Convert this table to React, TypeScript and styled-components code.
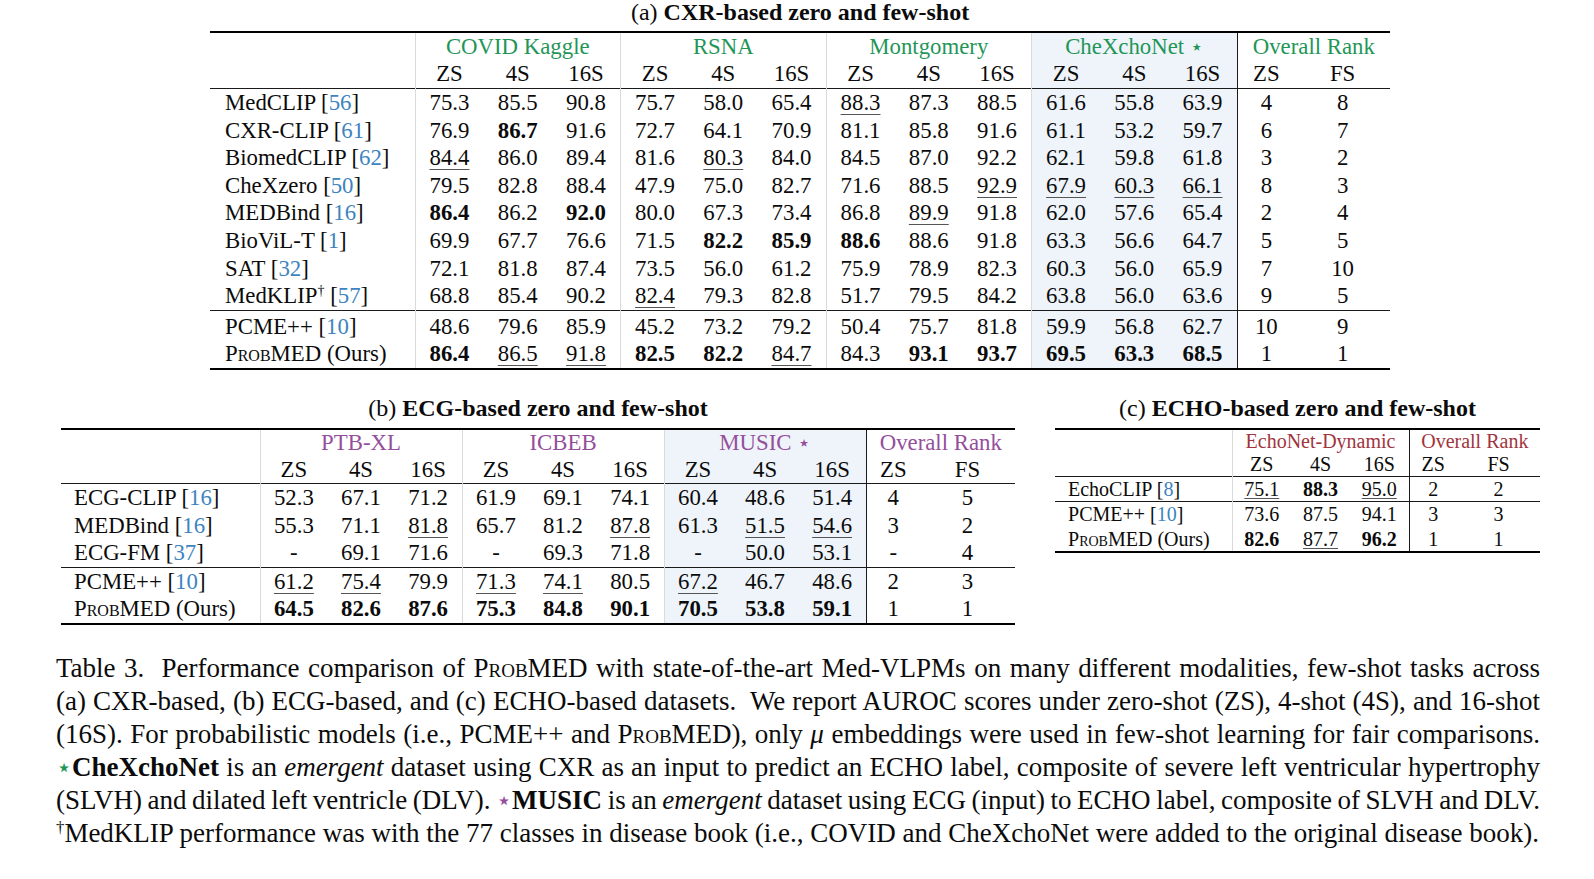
import React from "react";
import styled, { createGlobalStyle, css } from "styled-components";

const GREEN = "#1f9658";
const PURPLE = "#944f9c";
const RED = "#a1343d";
const BLUE = "#3d84c0";
const SHADE = "#eef4fa";

const GlobalStyle = createGlobalStyle`
  html, body { margin: 0; padding: 0; background: #fff; }
  body {
    font-family: "Liberation Serif", "Times New Roman", "DejaVu Serif", serif;
    color: #0b0b0b;
    overflow: hidden;
  }
`;

const Page = styled.main`
  width: 1594px;
  height: 879px;
  display: flex;
  flex-direction: column;
  align-items: flex-start;
`;

const Block = styled.section<{ $ml?: number }>`
  display: flex;
  flex-direction: column;
  align-items: stretch;
  margin-left: ${(p) => p.$ml ?? 0}px;
`;

const Pair = styled.div`
  display: flex;
  align-items: flex-start;
  gap: 40px;
  margin-left: 61px;
  margin-top: 26px;
`;

const Title = styled.div<{ $gap: number }>`
  font-size: 24px;
  line-height: 26px;
  text-align: center;
  white-space: nowrap;
  margin-top: -1px;
  margin-bottom: ${(p) => p.$gap}px;
  b { font-weight: 700; }
`;

const Grid = styled.table<{ $fs: number; $w: number; $uo: number }>`
  border-collapse: collapse;
  table-layout: fixed;
  width: ${(p) => p.$w}px;
  font-size: ${(p) => p.$fs}px;
  border-top: 2px solid #000;
  border-bottom: 2px solid #000;
  --underline-offset: ${(p) => p.$uo}px;
`;

const Col = styled.col<{ $w: number }>`
  width: ${(p) => p.$w}px;
`;

type Sep = "none" | "faint" | "solid";

const sepCss = (s?: Sep) =>
  s === "faint"
    ? "border-left: 1px solid #dadada;"
    : s === "solid"
    ? "border-left: 1px solid #1a1a1a;"
    : "";

const cellBase = css<{ $h: number; $sep?: Sep; $shade?: boolean; $pt?: number }>`
  padding: ${(p) => p.$pt ?? 0}px 0 0 0;
  line-height: ${(p) => p.$h}px;
  text-align: center;
  vertical-align: top;
  white-space: nowrap;
  font-weight: 400;
  background: ${(p) => (p.$shade ? SHADE : "transparent")};
  ${(p) => sepCss(p.$sep)}
`;

const HeadCell = styled.th<{ $h: number; $sep?: Sep; $shade?: boolean }>`
  ${cellBase}
`;

const GroupCell = styled.th<{ $h: number; $sep?: Sep; $shade?: boolean; $color: string }>`
  ${cellBase}
  color: ${(p) => p.$color};
`;

const DataCell = styled.td<{ $h: number; $sep?: Sep; $shade?: boolean; $pt?: number }>`
  ${cellBase}
`;

const NameCell = styled.td<{ $h: number; $pt?: number; $pl: number }>`
  ${cellBase}
  text-align: left;
  padding-left: ${(p) => p.$pl}px;
`;

const SubRow = styled.tr`
  border-bottom: 1px solid #1a1a1a;
`;

const BodyRow = styled.tr<{ $rule?: boolean }>`
  ${(p) => p.$rule && "border-top: 1px solid #1a1a1a;"}
`;

const Val = styled.span<{ $b?: boolean; $u?: boolean }>`
  font-weight: ${(p) => (p.$b ? 700 : 400)};
  ${(p) =>
    p.$u &&
    css`
      text-decoration: underline;
      text-decoration-color: #555;
      text-decoration-thickness: 1px;
      text-underline-offset: var(--underline-offset);
    `}
`;

const CiteNum = styled.span`
  color: ${BLUE};
`;

const Sc = styled.span`
  font-variant: small-caps;
`;

const Star = styled.span<{ $color?: string }>`
  font-family: "DejaVu Sans", sans-serif;
  font-size: 0.95em;
  line-height: 0;
  font-weight: 400;
  color: ${(p) => p.$color ?? "inherit"};
`;

const Dagger = styled.span`
  font-size: 0.62em;
  line-height: 0;
  vertical-align: 0.55em;
`;

const Caption = styled.div`
  margin-left: 56px;
  margin-top: 27px;
  width: 1484px;
  font-size: 27px;
  line-height: 33px;
  i { font-style: italic; }
  b { font-weight: 700; }
`;

const Line = styled.div<{ $last?: boolean }>`
  text-align: justify;
  text-align-last: ${(p) => (p.$last ? "left" : "justify")};
  word-spacing: ${(p) => (p.$last ? "0" : "-3px")};
  white-space: nowrap;
`;

const Cite = ({ n }: { n: string }) => (
  <>
    {" "}[<CiteNum>{n}</CiteNum>]
  </>
);

const Brand = () => (
  <>
    P<Sc>rob</Sc>MED
  </>
);

const Value = ({ raw }: { raw: string }) => {
  const b = raw.startsWith("*");
  const u = raw.startsWith("_");
  const text = b || u ? raw.slice(1) : raw;
  return (
    <Val $b={b} $u={u}>
      {text}
    </Val>
  );
};

interface Group {
  label: string;
  span: number;
  star?: boolean;
  shade?: boolean;
  sep: Sep;
}

interface DataRow {
  name: React.ReactNode;
  vals: string[];
  rule?: boolean;
  pt?: number;
}

interface TableSpec {
  fs: number;
  widths: number[];
  color: string;
  groups: Group[];
  subs: string[];
  h1: number;
  h2: number;
  rowH: number;
  namePad: number;
  underlineOffset: number;
  rows: DataRow[];
}

const ResultTable = ({ spec }: { spec: TableSpec }) => {
  const meta: { sep: Sep; shade: boolean }[] = [];
  spec.groups.forEach((g) => {
    for (let k = 0; k < g.span; k++) meta.push({ sep: k === 0 ? g.sep : "none", shade: !!g.shade });
  });
  const total = spec.widths.reduce((a, b) => a + b, 0);
  return (
    <Grid $fs={spec.fs} $w={total} $uo={spec.underlineOffset}>
      <colgroup>
        {spec.widths.map((w, i) => (
          <Col key={i} $w={w} />
        ))}
      </colgroup>
      <thead>
        <tr>
          <HeadCell $h={spec.h1} />
          {spec.groups.map((g, i) => (
            <GroupCell key={i} colSpan={g.span} $h={spec.h1} $sep={g.sep} $shade={g.shade} $color={spec.color}>
              {g.label}
              {g.star && (
                <>
                  {" "}
                  <Star>⋆</Star>
                </>
              )}
            </GroupCell>
          ))}
        </tr>
        <SubRow>
          <HeadCell $h={spec.h2} />
          {spec.subs.map((s, i) => (
            <HeadCell key={i} $h={spec.h2} $sep={meta[i].sep} $shade={meta[i].shade}>
              {s}
            </HeadCell>
          ))}
        </SubRow>
      </thead>
      <tbody>
        {spec.rows.map((r, ri) => (
          <BodyRow key={ri} $rule={r.rule}>
            <NameCell $h={spec.rowH} $pt={r.pt} $pl={spec.namePad}>
              {r.name}
            </NameCell>
            {r.vals.map((v, ci) => (
              <DataCell key={ci} $h={spec.rowH} $pt={r.pt} $sep={meta[ci].sep} $shade={meta[ci].shade}>
                <Value raw={v} />
              </DataCell>
            ))}
          </BodyRow>
        ))}
      </tbody>
    </Grid>
  );
};

const SUBS3 = ["ZS", "4S", "16S"];

const cxr: TableSpec = {
  fs: 22.8,
  widths: [205, ...Array(12).fill(68.5), 58, 95],
  color: GREEN,
  groups: [
    { label: "COVID Kaggle", span: 3, sep: "faint" },
    { label: "RSNA", span: 3, sep: "faint" },
    { label: "Montgomery", span: 3, sep: "faint" },
    { label: "CheXchoNet", span: 3, sep: "faint", star: true, shade: true },
    { label: "Overall Rank", span: 2, sep: "solid" },
  ],
  subs: [...SUBS3, ...SUBS3, ...SUBS3, ...SUBS3, "ZS", "FS"],
  h1: 27,
  h2: 28,
  rowH: 27.6,
  namePad: 15,
  underlineOffset: 4,
  rows: [
    { name: <>MedCLIP<Cite n="56" /></>, vals: ["75.3", "85.5", "90.8", "75.7", "58.0", "65.4", "_88.3", "87.3", "88.5", "61.6", "55.8", "63.9", "4", "8"] },
    { name: <>CXR-CLIP<Cite n="61" /></>, vals: ["76.9", "*86.7", "91.6", "72.7", "64.1", "70.9", "81.1", "85.8", "91.6", "61.1", "53.2", "59.7", "6", "7"] },
    { name: <>BiomedCLIP<Cite n="62" /></>, vals: ["_84.4", "86.0", "89.4", "81.6", "_80.3", "84.0", "84.5", "87.0", "92.2", "62.1", "59.8", "61.8", "3", "2"] },
    { name: <>CheXzero<Cite n="50" /></>, vals: ["79.5", "82.8", "88.4", "47.9", "75.0", "82.7", "71.6", "88.5", "_92.9", "_67.9", "_60.3", "_66.1", "8", "3"] },
    { name: <>MEDBind<Cite n="16" /></>, vals: ["*86.4", "86.2", "*92.0", "80.0", "67.3", "73.4", "86.8", "_89.9", "91.8", "62.0", "57.6", "65.4", "2", "4"] },
    { name: <>BioViL-T<Cite n="1" /></>, vals: ["69.9", "67.7", "76.6", "71.5", "*82.2", "*85.9", "*88.6", "88.6", "91.8", "63.3", "56.6", "64.7", "5", "5"] },
    { name: <>SAT<Cite n="32" /></>, vals: ["72.1", "81.8", "87.4", "73.5", "56.0", "61.2", "75.9", "78.9", "82.3", "60.3", "56.0", "65.9", "7", "10"] },
    { name: <>MedKLIP<Dagger>†</Dagger><Cite n="57" /></>, vals: ["68.8", "85.4", "90.2", "_82.4", "79.3", "82.8", "51.7", "79.5", "84.2", "63.8", "56.0", "63.6", "9", "5"] },
    { name: <>PCME++<Cite n="10" /></>, rule: true, pt: 2, vals: ["48.6", "79.6", "85.9", "45.2", "73.2", "79.2", "50.4", "75.7", "81.8", "59.9", "56.8", "62.7", "10", "9"] },
    { name: <><Brand /> (Ours)</>, vals: ["*86.4", "_86.5", "_91.8", "*82.5", "*82.2", "_84.7", "84.3", "*93.1", "*93.7", "*69.5", "*63.3", "*68.5", "1", "1"] },
  ],
};

const ecg: TableSpec = {
  fs: 22.8,
  widths: [199, ...Array(9).fill(67.33), 54, 95],
  color: PURPLE,
  groups: [
    { label: "PTB-XL", span: 3, sep: "faint" },
    { label: "ICBEB", span: 3, sep: "faint" },
    { label: "MUSIC", span: 3, sep: "faint", star: true, shade: true },
    { label: "Overall Rank", span: 2, sep: "solid" },
  ],
  subs: [...SUBS3, ...SUBS3, ...SUBS3, "ZS", "FS"],
  h1: 26,
  h2: 27,
  rowH: 27.6,
  namePad: 13,
  underlineOffset: 4,
  rows: [
    { name: <>ECG-CLIP<Cite n="16" /></>, vals: ["52.3", "67.1", "71.2", "61.9", "69.1", "74.1", "60.4", "48.6", "51.4", "4", "5"] },
    { name: <>MEDBind<Cite n="16" /></>, vals: ["55.3", "71.1", "_81.8", "65.7", "81.2", "_87.8", "61.3", "_51.5", "_54.6", "3", "2"] },
    { name: <>ECG-FM<Cite n="37" /></>, vals: ["-", "69.1", "71.6", "-", "69.3", "71.8", "-", "50.0", "53.1", "-", "4"] },
    { name: <>PCME++<Cite n="10" /></>, rule: true, vals: ["_61.2", "_75.4", "79.9", "_71.3", "_74.1", "80.5", "_67.2", "46.7", "48.6", "2", "3"] },
    { name: <><Brand /> (Ours)</>, vals: ["*64.5", "*82.6", "*87.6", "*75.3", "*84.8", "*90.1", "*70.5", "*53.8", "*59.1", "1", "1"] },
  ],
};

const echo: TableSpec = {
  fs: 20,
  widths: [177, 59, 59, 59, 48, 83],
  color: RED,
  groups: [
    { label: "EchoNet-Dynamic", span: 3, sep: "faint" },
    { label: "Overall Rank", span: 2, sep: "solid" },
  ],
  subs: [...SUBS3, "ZS", "FS"],
  h1: 22,
  h2: 24,
  rowH: 24.5,
  namePad: 13,
  underlineOffset: 2,
  rows: [
    { name: <>EchoCLIP<Cite n="8" /></>, vals: ["_75.1", "*88.3", "_95.0", "2", "2"] },
    { name: <>PCME++<Cite n="10" /></>, rule: true, vals: ["73.6", "87.5", "94.1", "3", "3"] },
    { name: <><Brand /> (Ours)</>, vals: ["*82.6", "_87.7", "*96.2", "1", "1"] },
  ],
};

export default function App() {
  return (
    <>
      <GlobalStyle />
      <Page>
        <Block $ml={210}>
          <Title $gap={6}>
            (a) <b>CXR-based zero and few-shot</b>
          </Title>
          <ResultTable spec={cxr} />
        </Block>
        <Pair>
          <Block>
            <Title $gap={7}>
              (b) <b>ECG-based zero and few-shot</b>
            </Title>
            <ResultTable spec={ecg} />
          </Block>
          <Block>
            <Title $gap={7}>
              (c) <b>ECHO-based zero and few-shot</b>
            </Title>
            <ResultTable spec={echo} />
          </Block>
        </Pair>
        <Caption>
          <Line>
            Table 3.&nbsp; Performance comparison of <Brand /> with state-of-the-art Med-VLPMs on many different
            modalities, few-shot tasks across
          </Line>
          <Line>
            (a) CXR-based, (b) ECG-based, and (c) ECHO-based datasets.&nbsp; We report AUROC scores under zero-shot
            (ZS), 4-shot (4S), and 16-shot
          </Line>
          <Line>
            (16S). For probabilistic models (i.e., PCME++ and <Brand />), only <i>μ</i> embeddings were used in
            few-shot learning for fair comparisons.
          </Line>
          <Line>
            <Star $color={GREEN}>⋆</Star>
            <b>CheXchoNet</b> is an <i>emergent</i> dataset using CXR as an input to predict an ECHO label, composite
            of severe left ventricular hypertrophy
          </Line>
          <Line>
            (SLVH) and dilated left ventricle (DLV). <Star $color={PURPLE}>⋆</Star>
            <b>MUSIC</b> is an <i>emergent</i> dataset using ECG (input) to ECHO label, composite of SLVH and DLV.
          </Line>
          <Line $last>
            <Dagger>†</Dagger>MedKLIP performance was with the 77 classes in disease book (i.e., COVID and CheXchoNet
            were added to the original disease book).
          </Line>
        </Caption>
      </Page>
    </>
  );
}
